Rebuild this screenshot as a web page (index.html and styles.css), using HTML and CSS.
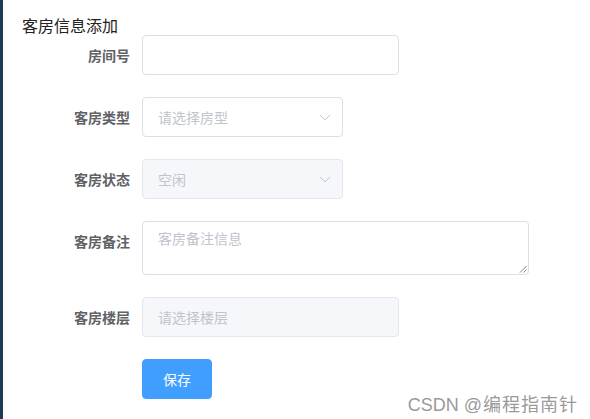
FILE: index.html
```html
<!DOCTYPE html>
<html lang="zh-CN">
<head>
<meta charset="utf-8">
<title>客房信息添加</title>
<link rel="stylesheet" href="styles.css">
</head>
<body>
<div class="page">
  <div class="title">客房信息添加</div>
  <form class="form">
    <div class="item">
      <label class="label">房间号</label>
      <div class="control"><div class="input w257"></div></div>
    </div>
    <div class="item">
      <label class="label">客房类型</label>
      <div class="control">
        <div class="input select w201"><span class="ph">请选择房型</span>
          <svg class="arrow" width="12" height="7" viewBox="0 0 12 7"><path d="M0.8 1 L6 5.8 L11.2 1" fill="none" stroke="#c0c4cc" stroke-width="1"/></svg>
        </div>
      </div>
    </div>
    <div class="item">
      <label class="label">客房状态</label>
      <div class="control">
        <div class="input select disabled w201"><span class="ph">空闲</span>
          <svg class="arrow" width="12" height="7" viewBox="0 0 12 7"><path d="M0.8 1 L6 5.8 L11.2 1" fill="none" stroke="#c0c4cc" stroke-width="1"/></svg>
        </div>
      </div>
    </div>
    <div class="item">
      <label class="label">客房备注</label>
      <div class="control">
        <div class="textarea"><span class="ph">客房备注信息</span>
          <svg class="grip" width="8" height="8" viewBox="0 0 8 8"><path d="M7.5 1 L1 7.5 M7.5 4.5 L4.5 7.5" stroke="#777" stroke-width="0.9"/></svg>
        </div>
      </div>
    </div>
    <div class="item">
      <label class="label">客房楼层</label>
      <div class="control"><div class="input disabled w257"><span class="ph">请选择楼层</span></div></div>
    </div>
    <div class="item">
      <div class="label"></div>
      <div class="control"><button type="button" class="btn">保存</button></div>
    </div>
  </form>
  <div class="watermark">CSDN <span class="wm-cjk">@编程指南针</span></div>
</div>
</body>
</html>
```
FILE: styles.css
```css
html, body {
  margin: 0;
  padding: 0;
  background: #fff;
}
body {
  font-family: "Noto Sans CJK SC", "Liberation Sans", sans-serif;
}
.page {
  position: relative;
  box-sizing: border-box;
  min-height: 100vh;
  border-left: 3px solid #1f3b52;
  padding: 15px 0 0 19px;
}
.title {
  font-size: 16px;
  line-height: 20px;
  color: #222;
}
.form {
  margin: 0;
}
.item {
  display: flex;
  align-items: flex-start;
  margin-bottom: 22px;
}
.label {
  box-sizing: border-box;
  width: 120px;
  padding-right: 12px;
  text-align: right;
  font-size: 14px;
  font-weight: bold;
  line-height: 40px;
  color: #606266;
}
.control {
  display: flex;
}
.input {
  box-sizing: border-box;
  height: 40px;
  border: 1px solid #dcdfe6;
  border-radius: 4px;
  background: #fff;
  display: flex;
  align-items: center;
  padding: 0 15px;
}
.w257 { width: 257px; }
.w201 { width: 201px; }
.select {
  justify-content: space-between;
  padding-right: 11px;
}
.disabled {
  background: #f5f7fa;
  border-color: #e4e7ed;
}
.ph {
  font-size: 14px;
  color: #c0c4cc;
  line-height: 20px;
}
.arrow {
  display: block;
}
.textarea {
  position: relative;
  box-sizing: border-box;
  width: 387px;
  height: 54px;
  border: 1px solid #dcdfe6;
  border-radius: 4px;
  padding: 5px 15px;
  line-height: 21px;
}
.textarea .ph {
  line-height: 21px;
}
.grip {
  position: absolute;
  right: 1px;
  bottom: 1px;
}
.btn {
  box-sizing: border-box;
  height: 40px;
  width: 70px;
  border: 1px solid #409eff;
  border-radius: 4px;
  background: #409eff;
  color: #fff;
  font-family: "Noto Sans CJK SC", sans-serif;
  font-size: 14px;
  padding: 0;
}
.watermark {
  position: absolute;
  right: 12px;
  bottom: 4px;
  font-family: "Liberation Sans", "Noto Sans CJK SC", sans-serif;
  font-size: 18px;
  line-height: 20px;
  color: #9a9a9a;
  white-space: nowrap;
}
.wm-cjk {
  letter-spacing: 1px;
}
```
